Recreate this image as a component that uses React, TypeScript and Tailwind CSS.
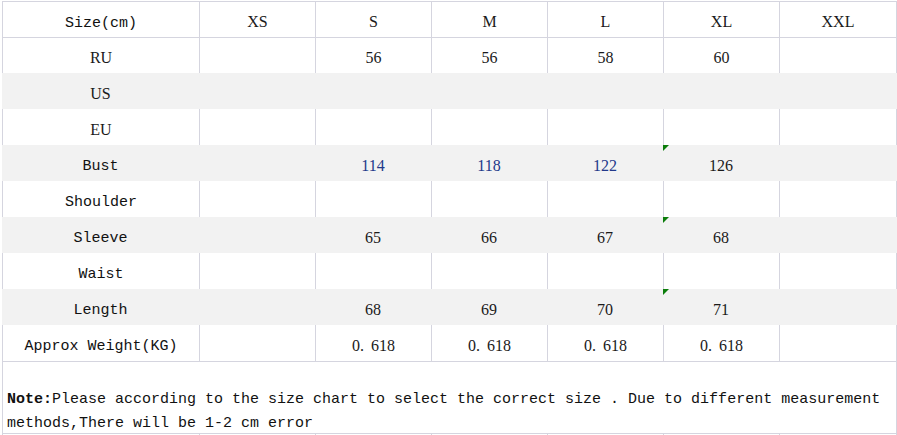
import React from 'react';

// Size chart: label column + 6 size columns, striped rows cover grid lines
const cols = 'grid grid-cols-[197px_116px_116px_116px_116px_116px_118px]';
const line = 'border-[#d5d5df]';

type Row = {
  label: string;
  serifLabel?: boolean;
  values: string[];
  shaded?: boolean;
  blue?: number[];
  mark?: boolean;
};

const rows: Row[] = [
  { label: 'RU', serifLabel: true, values: ['', '56', '56', '58', '60', ''] },
  { label: 'US', serifLabel: true, values: ['', '', '', '', '', ''], shaded: true },
  { label: 'EU', serifLabel: true, values: ['', '', '', '', '', ''] },
  { label: 'Bust', values: ['', '114', '118', '122', '126', ''], shaded: true, blue: [1, 2, 3], mark: true },
  { label: 'Shoulder', values: ['', '', '', '', '', ''] },
  { label: 'Sleeve', values: ['', '65', '66', '67', '68', ''], shaded: true, mark: true },
  { label: 'Waist', values: ['', '', '', '', '', ''] },
  { label: 'Length', values: ['', '68', '69', '70', '71', ''], shaded: true, mark: true },
];

const mono = "font-['Liberation_Mono',monospace] text-[15px] pt-[9px] text-[#111]";
const serif = "font-['Liberation_Serif',serif] text-[16px] pt-[5px]";

function Weight() {
  return (
    <span>
      0<span className="inline-block w-[11px]">.</span>618
    </span>
  );
}

function Cell({ children, className = '' }: { children?: React.ReactNode; className?: string }) {
  return <div className={`relative flex items-center justify-center ${className}`}>{children}</div>;
}

export default function App() {
  const sizes = ['XS', 'S', 'M', 'L', 'XL', 'XXL'];

  return (
    <div className="w-[897px] h-[435px] bg-white overflow-hidden pt-[1px] text-[#1a1a1a]">
      {/* header */}
      <div className={`${cols} h-[36px] pl-[2px]`}>
        <Cell className={`border-t border-l ${line} ${mono}`}>Size(cm)</Cell>
        {sizes.map((s, i) => (
          <Cell key={s} className={`border-t border-l ${line} ${serif} ${i === 5 ? 'border-r' : ''}`}>
            {s}
          </Cell>
        ))}
      </div>

      {rows.map((r, ri) => (
        <div
          key={r.label}
          className={`${cols} h-[36px] ${r.shaded ? 'bg-[#f2f2f2] ml-[2px]' : 'pl-[2px]'}`}
        >
          <Cell
            className={`${r.serifLabel ? serif : mono} ${r.shaded ? '' : `border-l ${line}`} ${ri === 0 ? `border-t ${line}` : ''}`}
          >
            {r.label}
          </Cell>
          {r.values.map((v, i) => (
            <Cell
              key={i}
              className={`${serif} ${r.shaded ? '' : `border-l ${line}`} ${!r.shaded && i === 5 ? 'border-r' : ''} ${ri === 0 ? `border-t ${line}` : ''} ${r.blue?.includes(i) ? 'text-[#22398a]' : ''}`}
            >
              {r.mark && i === 4 && (
                <span className="absolute top-0 left-0 w-0 h-0 border-t-[6px] border-r-[6px] border-t-[#0b7d0b] border-r-transparent" />
              )}
              {v}
            </Cell>
          ))}
        </div>
      ))}

      {/* weight row */}
      <div className={`${cols} h-[37px] pl-[2px]`}>
        <Cell className={`border-l border-b ${line} ${mono}`}>Approx Weight(KG)</Cell>
        {['', 'w', 'w', 'w', 'w', ''].map((v, i) => (
          <Cell key={i} className={`border-l border-b ${line} ${serif} ${i === 5 ? 'border-r' : ''}`}>
            {v && <Weight />}
          </Cell>
        ))}
      </div>

      {/* note */}
      <div className="pl-[2px]">
        <div className={`h-[72px] w-[895px] border-l border-r border-b ${line} pt-[26px] pl-[4px] font-['Liberation_Mono',monospace] text-[15px] leading-[24px] text-[#111]`}>
          <b>Note:</b>Please according to the size chart to select the correct size . Due to different measurement methods,There will be 1-2 cm error
        </div>
        <div className={`${cols} h-[4px]`}>
          {sizes.concat(['x']).map((s, i) => (
            <div key={i} className={`border-l ${line} ${i === 6 ? 'border-r' : ''}`} />
          ))}
        </div>
      </div>
    </div>
  );
}
